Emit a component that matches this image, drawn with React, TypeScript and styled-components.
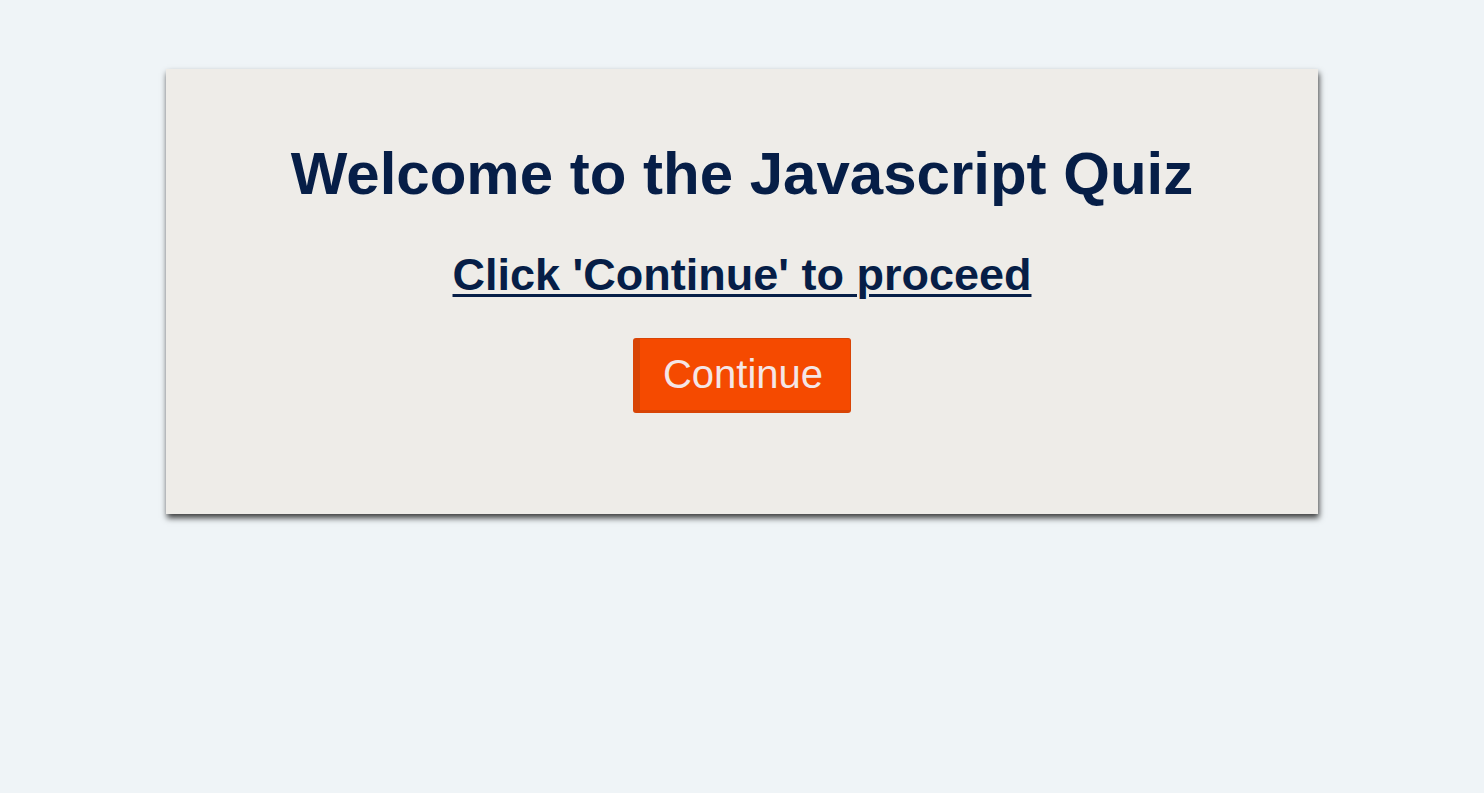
import React from "react";
import styled, { createGlobalStyle } from "styled-components";

const Global = createGlobalStyle`
  html, body { margin: 0; padding: 0; }
  body {
    background: #eff4f7;
    font-family: "Liberation Sans", Arial, sans-serif;
  }
`;

const Page = styled.div`
  display: flex;
  justify-content: center;
  align-items: flex-start;
  box-sizing: border-box;
  min-height: 100vh;
  padding-top: 69px;
`;

const Card = styled.section`
  width: 1152px;
  height: 445px;
  box-sizing: border-box;
  background: #eeece8;
  box-shadow: 1px 4px 6px rgba(0, 0, 0, 0.75);
  display: flex;
  flex-direction: column;
  align-items: center;
  padding-top: 70px;
`;

const Title = styled.h1`
  margin: 0;
  font-size: 60px;
  line-height: 69px;
  font-weight: 700;
  color: #061e47;
`;

const Subtitle = styled.h2`
  margin: 41px 0 0;
  font-size: 45px;
  line-height: 52px;
  font-weight: 700;
  color: #061e47;
  text-decoration: underline;
  text-decoration-thickness: 3px;
  text-underline-offset: 4px;
`;

const Button = styled.button`
  margin-top: 37px;
  font-family: "Liberation Sans", Arial, sans-serif;
  font-size: 40px;
  line-height: 46px;
  color: #f4e6e6;
  background: #f54a00;
  border: 1px solid #d84405;
  border-left-width: 7px;
  border-bottom-width: 3px;
  border-radius: 3px;
  padding: 12px 27px 13px 23px;
  cursor: pointer;
`;

export default function App() {
  return (
    <>
      <Global />
      <Page>
        <Card>
          <Title>Welcome to the Javascript Quiz</Title>
          <Subtitle>Click 'Continue' to proceed</Subtitle>
          <Button>Continue</Button>
        </Card>
      </Page>
    </>
  );
}
